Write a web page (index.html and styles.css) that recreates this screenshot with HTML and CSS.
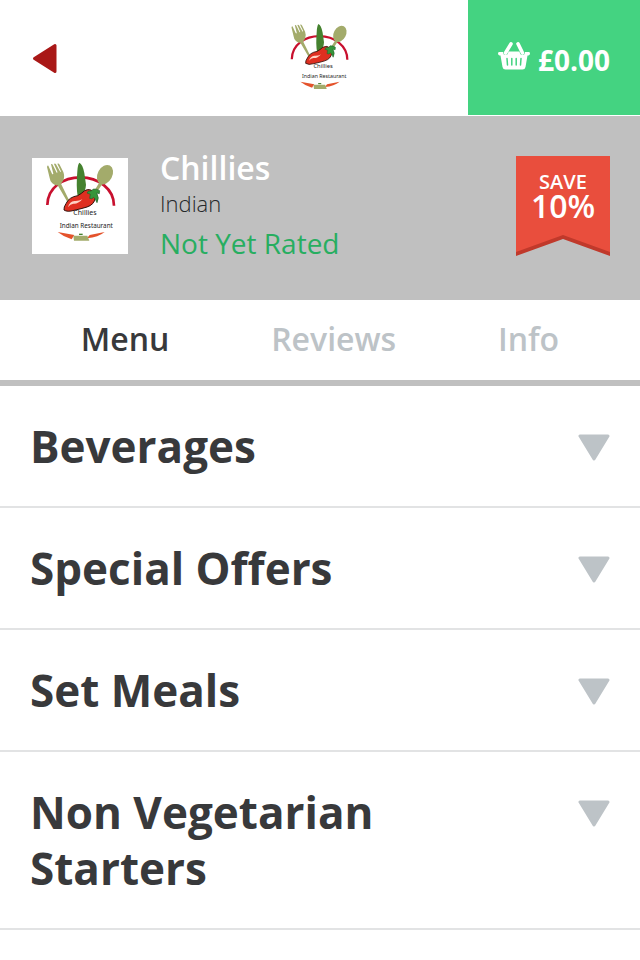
FILE: index.html
```html
<!DOCTYPE html>
<html lang="en">
<head>
<meta charset="utf-8">
<meta name="viewport" content="width=device-width, initial-scale=1">
<title>Chillies</title>
<link rel="stylesheet" href="styles.css">
</head>
<body>
<svg class="defs" aria-hidden="true">
  <symbol id="logo" viewBox="0 0 288 288">
    <path d="M46 141C47 88 94 58 146 58S246 92 246 143" fill="none" stroke="#c8102e" stroke-width="8"/>
    <path d="M49 23L60 47Q62 50 64 47L57 19Q60 16 62 20L74 44Q77 45 76 41L66 18Q69 15 72 19L85 42Q88 42 86 38L76 17Q80 15 83 20L94 42Q99 56 94 67Q91 73 87 77L112 128Q111 135 105 130L77 82Q68 83 61 76Q54 70 53 60L45 27Q46 22 49 23Z" fill="#a3ab6b"/>
    <path d="M142 14Q152 18 157 45L162 80Q161 100 149 111L137 116Q132 85 136 40Q137 20 142 14Z" fill="#45822f"/>
    <ellipse cx="219" cy="50" rx="22" ry="31" transform="rotate(28 219 50)" fill="#a3ab6b"/>
    <path d="M203 72L211 78L193 105L186 100Z" fill="#a3ab6b"/>
    <path d="M184 102Q174 90 158 98Q148 107 137 113Q111 117 102 137Q95 147 96 156Q106 163 126 157Q149 152 165 147Q187 140 190 119Z" fill="#df2f20" stroke="#30100a" stroke-width="3"/>
    <path d="M108 147Q113 131 127 129Q140 130 151 124Q137 139 124 137Q115 138 108 147Z" fill="#ffd2c4"/>
    <path d="M165 105Q167 97 178 99L184 93Q193 92 203 98L202 107L194 105Q203 119 195 134Q190 121 185 118Q180 125 173 121L175 109Z" fill="#35953a" stroke="#20602a" stroke-width="2"/>
    <text x="124" y="172" font-size="21" class="logo-text">Chillies</text>
    <text x="83" y="210" font-size="19" class="logo-text">Indian Restaurant</text>
    <path d="M77 222L127 231L119 244Q94 236 77 222Z" fill="#e4522b"/>
    <path d="M218 222L173 231L165 241Q199 238 218 222Z" fill="#e4522b"/>
    <path d="M124 233H166L172 248H126Z" fill="#a3ab6b"/>
    <path d="M141 227H152V231H141Z" fill="#45822f"/>
  </symbol>
  <symbol id="triangle" viewBox="0 0 32 27">
    <path d="M2 2H30L16 25Z" stroke-width="3" stroke-linejoin="round" stroke="currentColor" fill="currentColor"/>
  </symbol>
</svg>
<header class="topbar">
  <a class="back" href="#back" aria-label="Back">
    <svg viewBox="0 0 25 31"><path d="M2.500 15.500L23 2.500V28.500Z" fill="#a91817" stroke="#a91817" stroke-width="3" stroke-linejoin="round"/></svg>
  </a>
  <svg class="brand" role="img" aria-label="Chillies Indian Restaurant"><use href="#logo"/></svg>
  <a class="basket" href="#basket">
    <svg viewBox="0 0 32 30" aria-hidden="true">
      <path d="M7.500 12L13 2.800M24.500 12L20 2.800" stroke="#fff" stroke-width="3.600" stroke-linecap="round"/>
      <path d="M1 11H5Q5 14 7.500 14Q10 14 10.500 10.500H21.500Q22 14 24.500 14Q27 14 27 11H31Q32 11 32 12.500Q32 14 30.500 14.500H29.500L27.500 26Q27 28.500 24.500 28.500H7.500Q5 28.500 4.500 26L2.500 14.500H1.500Q0 14 0 12.500Q0 11 1 11Z" fill="#fff"/>
      <path d="M9 17.500L9.500 24M13.800 17.500V24M18.200 17.500V24M23 17.500L22.500 24" stroke="#44d381" stroke-width="1.500" stroke-linecap="round"/>
    </svg>
    <span>£0.00</span>
  </a>
</header>
<main>
  <section class="restaurant">
    <svg class="thumb" role="img" aria-label="Chillies Indian Restaurant"><use href="#logo"/></svg>
    <div class="details">
      <h1>Chillies</h1>
      <p class="cuisine">Indian</p>
      <p class="rating">Not Yet Rated</p>
    </div>
    <div class="ribbon">
      <div class="ribbon-face"><span class="save">SAVE</span><span class="percent">10%</span></div>
    </div>
  </section>
  <nav class="tabs">
    <a class="active" href="#menu">Menu</a>
    <a href="#reviews">Reviews</a>
    <a href="#info">Info</a>
  </nav>
  <div class="menu" id="menu">
    <button type="button"><span>Beverages</span><svg aria-hidden="true"><use href="#triangle"/></svg></button>
    <button type="button"><span>Special Offers</span><svg aria-hidden="true"><use href="#triangle"/></svg></button>
    <button type="button"><span>Set Meals</span><svg aria-hidden="true"><use href="#triangle"/></svg></button>
    <button type="button"><span>Non Vegetarian Starters</span><svg aria-hidden="true"><use href="#triangle"/></svg></button>
  </div>
</main>
</body>
</html>
```
FILE: styles.css
```css
* { box-sizing: border-box; }
body {
  margin: 0;
  background: #fff;
  color: #38393b;
  font-family: "Open Sans", "Noto Sans", sans-serif;
}
a { color: inherit; text-decoration: none; }
h1, p { margin: 0; }
.defs { position: absolute; width: 0; height: 0; }
.logo-text { font-family: "Noto Sans", sans-serif; fill: #222; }

.topbar {
  display: grid;
  grid-template-columns: 170px 1fr 172px;
  align-items: center;
  height: 116px;
  padding-bottom: 1px;
}
.back { padding: 2px 0 0 32px; }
.back svg { display: block; width: 25px; height: 31px; }
.brand { width: 80px; height: 80px; justify-self: center; margin-top: 4px; }
.basket {
  display: flex;
  align-items: center;
  justify-content: center;
  gap: 8px;
  height: 100%;
  background: #44d381;
  color: #fff;
  font-size: 28px;
  font-weight: 700;
  line-height: 40px;
}
.basket svg { width: 32px; height: 30px; margin-bottom: 4px; }
.basket span { padding-top: 4px; }

.restaurant {
  display: flex;
  gap: 32px;
  height: 184px;
  padding: 32px 30px 32px 32px;
  background: #c0c0c0;
}
.thumb { flex: none; width: 96px; height: 96px; margin-top: 10px; background: #fff; }
.details { flex: 1; }
h1 { color: #fff; font-size: 32px; font-weight: 600; line-height: 40px; }
.cuisine { color: #25282a; font-size: 22px; font-weight: 300; line-height: 30px; }
.rating { color: #27ae60; font-size: 28px; line-height: 50px; }
.ribbon {
  flex: none;
  width: 94px;
  height: 100px;
  margin-top: 8px;
  background: #c0392b;
  clip-path: polygon(0 0, 100% 0, 100% 100%, 50% 83px, 0 100%);
}
.ribbon-face {
  display: flex;
  flex-direction: column;
  height: 100%;
  padding-top: 14px;
  background: #e94e3d;
  color: #fff;
  font-weight: 600;
  text-align: center;
  clip-path: polygon(0 0, 100% 0, 100% 96px, 50% 79px, 0 96px);
}
.save { font-size: 20px; line-height: 24px; }
.percent { font-size: 32px; line-height: 24px; }

.tabs {
  display: flex;
  justify-content: space-around;
  padding: 0 30px 2px;
  border-bottom: 6px solid #c0c0c0;
  color: #bdc3c7;
  font-size: 32px;
  font-weight: 600;
  line-height: 78px;
}
.tabs .active { color: #38393b; }

.menu button {
  display: flex;
  align-items: flex-start;
  justify-content: space-between;
  gap: 120px;
  width: 100%;
  padding: 32px 30px;
  border: 0;
  border-bottom: 2px solid #e2e3e4;
  background: none;
  color: inherit;
  font: 700 44px/56px "Open Sans", "Noto Sans", sans-serif;
  text-align: left;
}
.menu svg { flex: none; width: 32px; height: 27px; margin-top: 16px; color: #bdc3c7; }
```
